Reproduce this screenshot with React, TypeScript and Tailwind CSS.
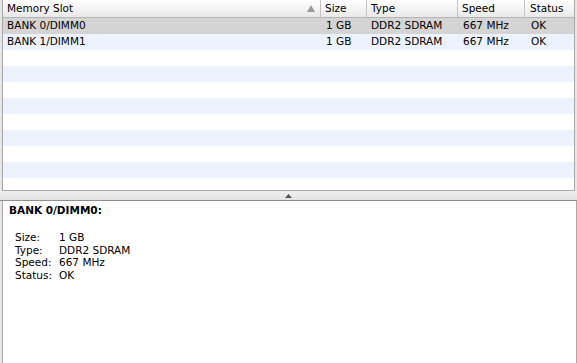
import React from "react";

const rows = [
  { slot: "BANK 0/DIMM0", size: "1 GB", type: "DDR2 SDRAM", speed: "667 MHz", status: "OK" },
  { slot: "BANK 1/DIMM1", size: "1 GB", type: "DDR2 SDRAM", speed: "667 MHz", status: "OK" },
];

function Row({ i }: { i: number }) {
  const r = rows[i];
  const bg = i === 0 ? "bg-[#d4d4d4]" : i % 2 === 1 ? "bg-[#edf3fe]" : "bg-white";
  return (
    <div className={`flex h-[16px] shrink-0 items-center ${bg}`}>
      <div className="w-[318px] pl-[4px]">{r ? r.slot : ""}</div>
      <div className="w-[46px] pl-[5px]">{r ? r.size : ""}</div>
      <div className="w-[91px] pl-[4px]">{r ? r.type : ""}</div>
      <div className="w-[67px] pl-[5px]">{r ? r.speed : ""}</div>
      <div className="flex-1 pl-[6px]">{r ? r.status : ""}</div>
    </div>
  );
}

export default function App() {
  return (
    <div
      className="flex h-[363px] w-[577px] flex-col bg-[#e6e6e6] text-[10.5px] text-black"
      style={{ fontFamily: '"DejaVu Sans", sans-serif' }}
    >
      <div className="ml-[2px] mr-[2px] flex h-[191px] shrink-0 flex-col overflow-hidden border-x border-b border-[#a9a9a9] bg-white">
        <div className="flex h-[18px] shrink-0 items-center border-b border-[#b5b5b5] bg-gradient-to-b from-[#ffffff] to-[#e9e9e9]">
          <div className="relative flex h-full w-[318px] items-center border-r border-[#c4c4c4] pl-[4px]">
            Memory Slot
            <svg className="absolute right-[5px] top-[5px]" width="8" height="7" viewBox="0 0 8 7">
              <path d="M4 0 L8 7 L0 7 Z" fill="#9a9a9a" />
            </svg>
          </div>
          <div className="flex h-full w-[46px] items-center border-r border-[#c4c4c4] pl-[4px]">Size</div>
          <div className="flex h-full w-[91px] items-center border-r border-[#c4c4c4] pl-[4px]">Type</div>
          <div className="flex h-full w-[67px] items-center border-r border-[#c4c4c4] pl-[4px]">Speed</div>
          <div className="flex h-full flex-1 items-center pl-[5px]">Status</div>
        </div>
        {Array.from({ length: 11 }).map((_, i) => (
          <Row key={i} i={i} />
        ))}
      </div>
      <div className="flex h-[10px] shrink-0 items-center justify-center border-b border-[#8f8f8f] bg-gradient-to-b from-[#f0f0f0] to-[#e2e2e2]">
        <svg width="7" height="4" viewBox="0 0 7 4">
          <path d="M3.5 0 L7 4 L0 4 Z" fill="#555" />
        </svg>
      </div>
      <div className="ml-[2px] flex-1 border-l border-r border-[#a9a9a9] bg-white pl-[6px] pt-[2px]">
        <div className="font-bold leading-[14px]">BANK 0/DIMM0:</div>
        <div className="mt-[14px] pl-[6px] leading-[12.7px]">
          <div className="flex"><span className="w-[44px]">Size:</span><span>1 GB</span></div>
          <div className="flex"><span className="w-[44px]">Type:</span><span>DDR2 SDRAM</span></div>
          <div className="flex"><span className="w-[44px]">Speed:</span><span>667 MHz</span></div>
          <div className="flex"><span className="w-[44px]">Status:</span><span>OK</span></div>
        </div>
      </div>
    </div>
  );
}
